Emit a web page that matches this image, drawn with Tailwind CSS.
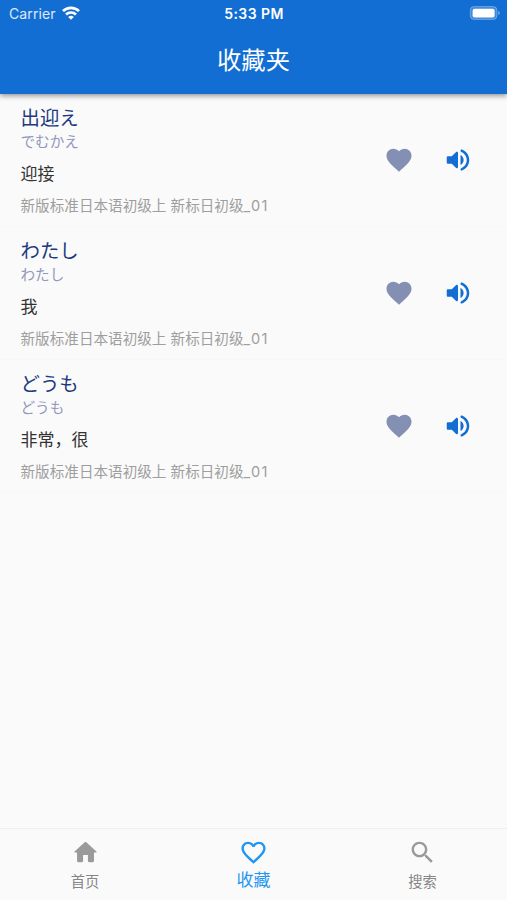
<!DOCTYPE html>
<html lang="zh-CN">
  <head>
    <meta charset="UTF-8" />
    <meta name="viewport" content="width=device-width, initial-scale=1.0" />
    <title>收藏夹</title>
    <script src="https://cdn.jsdelivr.net/npm/@tailwindcss/browser@4"></script>
  </head>
  <body class="flex flex-col h-screen overflow-hidden bg-[#fafafa] font-['Inter','Noto_Sans_CJK_SC',sans-serif]">

    <header class="relative h-[94px] shrink-0 bg-[#126ed2] text-white shadow-[0_2px_5px_rgba(0,0,0,0.4)]">
      <!-- status bar -->
      <div class="grid grid-cols-3 items-center h-[27px] pl-[9px] pr-[7px] text-[14px]">
        <div class="flex items-center gap-1.5 text-white/85">
          <span class="tracking-[0.1px]">Carrier</span>
          <svg class="w-[18px] h-[14px] -mt-px" viewBox="0 0 18 14" fill="none" stroke="#fff" stroke-width="2.7">
            <path d="M1 5.1a11.5 11.5 0 0 1 16 0" />
            <path d="M4 8.5a7.2 7.2 0 0 1 10 0" />
            <path d="M9 13.8 6.2 11a4 4 0 0 1 5.6 0z" fill="#fff" stroke="none" />
          </svg>
        </div>
        <span class="text-center text-[14px] font-semibold tracking-[0.45px] whitespace-nowrap -ml-px">5:33 PM</span>
        <svg class="justify-self-end w-[31px] h-[14px] -mt-px" viewBox="0 0 31 14">
          <rect x="1.300" y="0.6" width="26.6" height="12.8" rx="3.6" fill="#fff" fill-opacity="0.2" stroke="#fff" stroke-opacity="0.3" />
          <rect x="3.6" y="2.8" width="22" height="8.6" rx="2" fill="#fff" />
          <path d="M29.2 5v4c1-.4 1.6-1.1 1.6-2s-.6-1.600-1.6-2z" fill="#fff" fill-opacity="0.4" />
        </svg>
      </div>
      <h1 class="mt-[15px] text-center text-[24.3px] leading-9">收藏夹</h1>
    </header>

    <main class="flex-1" id="wordList">
      <!-- rows are inserted below -->
    </main>

    <nav class="grid grid-cols-3 h-[72px] shrink-0 border-t border-[#f0f0f0] text-[#9a9a9a] text-center">
      <a class="flex flex-col items-center pt-[9px]">
        <svg class="size-[29px] ml-px" viewBox="0 0 24 24" fill="currentColor"><path d="M10 19v-5h4v5c0 .55.45 1 1 1h3c.55 0 1-.45 1-1v-7h1.700c.46 0 .68-.57.33-.87L12.670 3.600c-.38-.34-.96-.34-1.340 0l-8.360 7.530c-.34.3-.13.87.33.87H5v7c0 .55.45 1 1 1h3c.55 0 1-.45 1-1z" /></svg>
        <span class="mt-[5px] ml-px text-[14.3px] leading-5 text-[#858585]">首页</span>
      </a>
      <a class="flex flex-col items-center pt-[9px] text-[#2196f3]">
        <svg class="size-[29px]" viewBox="0 0 24 24" fill="currentColor"><path d="M16.500 3c-1.740 0-3.410.81-4.500 2.090C10.910 3.810 9.240 3 7.500 3 4.420 3 2 5.420 2 8.500c0 3.780 3.400 6.860 8.550 11.540L12 21.350l1.450-1.320C18.600 15.360 22 12.280 22 8.500 22 5.420 19.580 3 16.500 3zm-4.400 15.550l-.1.100-.1-.1C7.140 14.240 4 11.390 4 8.500 4 6.500 5.500 5 7.500 5c1.540 0 3.040.99 3.570 2.360h1.870C13.460 5.990 14.960 5 16.500 5c2 0 3.500 1.500 3.500 3.500 0 2.890-3.140 5.740-7.900 10.050z" /></svg>
        <span class="mt-[3px] text-[17px] leading-5">收藏</span>
      </a>
      <a class="flex flex-col items-center pt-[9px]">
        <svg class="size-[29px]" viewBox="0 0 24 24" fill="currentColor"><path d="M15.500 14h-.79l-.28-.27C15.410 12.590 16 11.110 16 9.500 16 5.910 13.090 3 9.500 3S3 5.910 3 9.500 5.910 16 9.500 16c1.610 0 3.090-.59 4.230-1.570l.27.28v.79l5 4.990L20.490 19l-4.990-5zm-6 0C7.010 14 5 11.990 5 9.500S7.010 5 9.500 5 14 7.010 14 9.500 11.990 14 9.500 14z" /></svg>
        <span class="mt-[5px] text-[14.3px] leading-5 text-[#858585]">搜索</span>
      </a>
    </nav>

    <script>
      const words = [
        { word: '出迎え', kana: 'でむかえ', meaning: '迎接' },
        { word: 'わたし', kana: 'わたし', meaning: '我' },
        { word: 'どうも', kana: 'どうも', meaning: '非常，很' },
      ];
      const book = '新版标准日本语初级上 新标日初级';
      const unit = '_01';

      const wordList = document.getElementById('wordList');

      words.forEach((item) => {
        const row = document.createElement('div');
        row.className = 'flex h-[133px] border-b border-[#f7f7f7] pl-[20.5px] pr-[34px]';
        row.innerHTML = `
          <div class="flex-1 pt-[10px]">
            <div lang="ja" class="text-[19.4px] leading-[26px] text-[#1d3a80] font-['Noto_Sans_CJK_JP',sans-serif]">${item.word}</div>
            <div lang="ja" class="mt-px text-[14.6px] leading-5 text-[#9298bd] font-['Noto_Sans_CJK_JP',sans-serif]">${item.kana}</div>
            <div class="mt-[11px] text-[17px] leading-6 text-[#333333]">${item.meaning}</div>
            <div class="mt-[10px] text-[14.6px] leading-5 text-[#9e9e9e]">${book}<span class="tracking-[1.4px]">${unit}</span></div>
          </div>
          <div class="flex gap-[29px] pt-[51px]">
            <svg class="size-[30px]" viewBox="0 0 24 24" fill="#8390b3"><path d="M12 21.350l-1.450-1.320C5.400 15.360 2 12.280 2 8.500 2 5.420 4.420 3 7.500 3c1.740 0 3.410.81 4.500 2.090C13.090 3.810 14.760 3 16.500 3 19.580 3 22 5.420 22 8.500c0 3.780-3.400 6.860-8.550 11.540L12 21.350z" /></svg>
            <svg class="size-[30px]" viewBox="0 0 24 24" fill="#126ed2"><path d="M3 10v4c0 .55.45 1 1 1h3l3.290 3.290c.63.63 1.710.18 1.710-.71V6.410c0-.89-1.080-1.340-1.710-.71L7 9H4c-.55 0-1 .45-1 1zm13.500 2c0-1.770-1.020-3.290-2.500-4.030v8.050c1.480-.73 2.500-2.250 2.500-4.020zM14 4.450v.2c0 .38.250.71.600.85C17.180 6.530 19 9.060 19 12s-1.820 5.470-4.400 6.500c-.36.14-.6.47-.6.85v.2c0 .63.63 1.070 1.210.85C18.600 19.110 21 15.840 21 12s-2.400-7.110-5.790-8.400c-.58-.23-1.210.22-1.210.85z" /></svg>
          </div>`;
        wordList.appendChild(row);
      });
    </script>

  </body>
</html>
